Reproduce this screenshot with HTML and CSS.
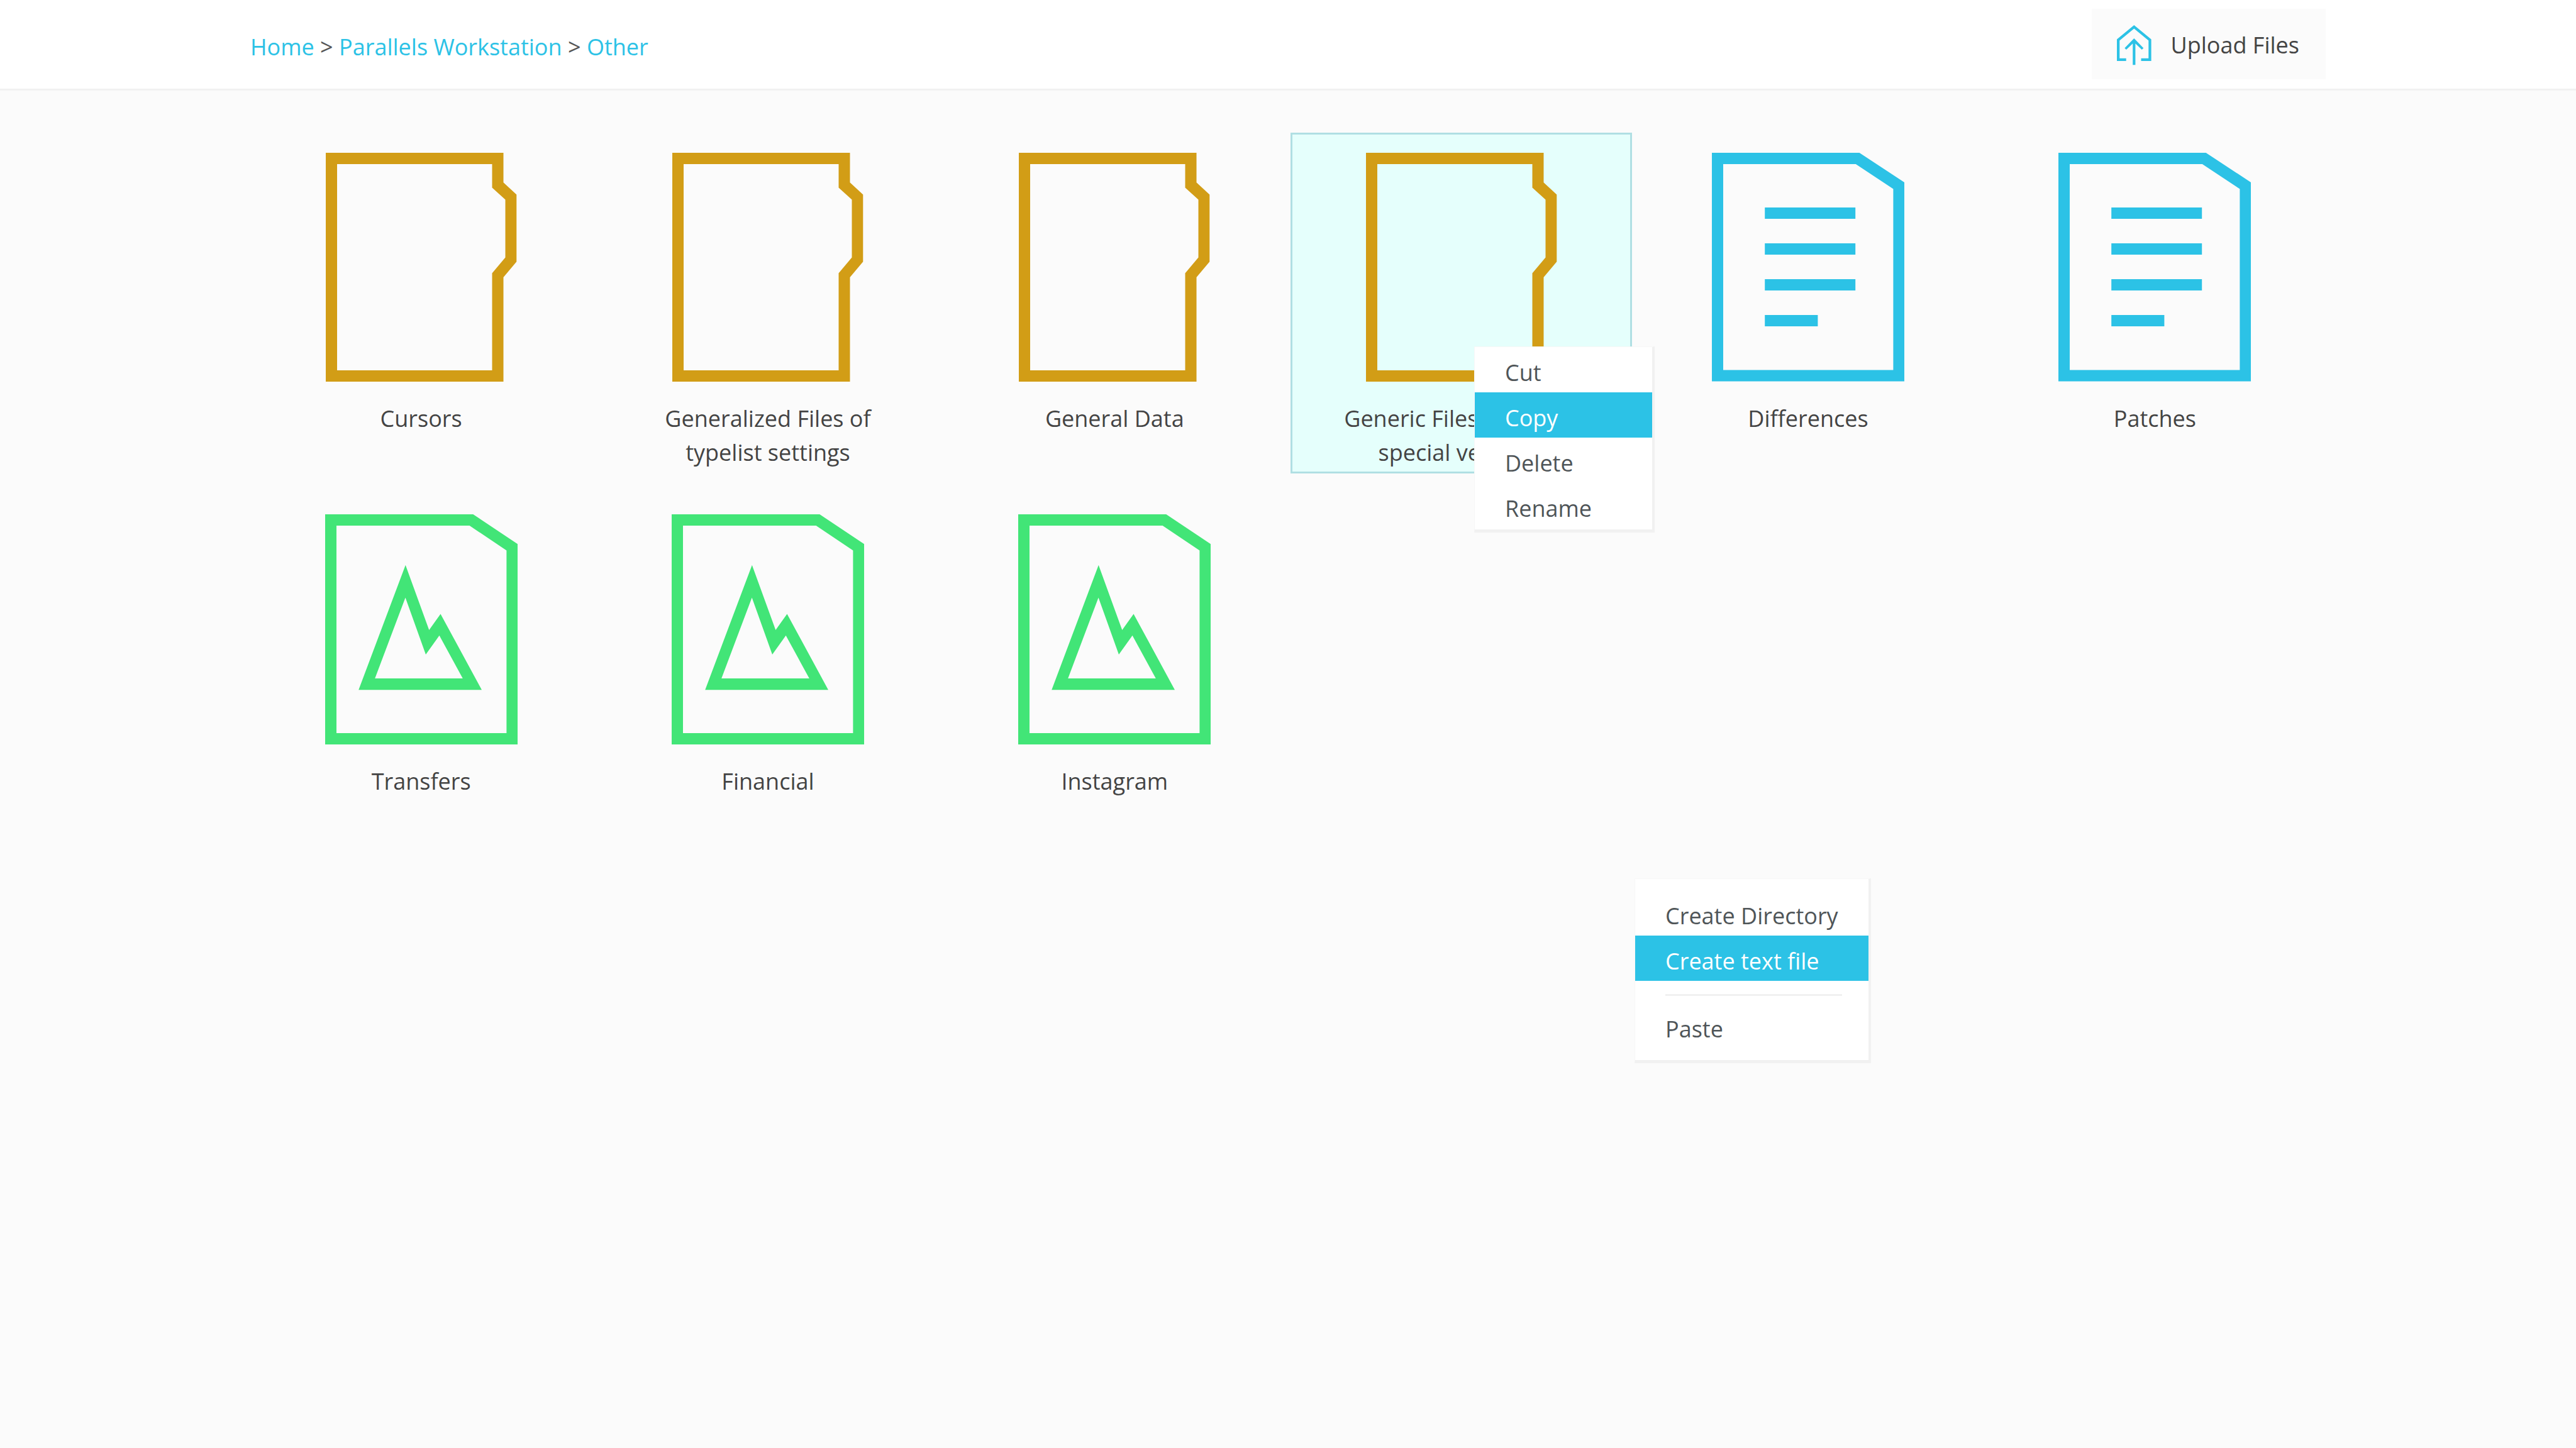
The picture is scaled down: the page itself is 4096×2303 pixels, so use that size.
FILE: index.html
```html
<!DOCTYPE html>
<html lang="en">
<head>
  <meta charset="utf-8">
  <meta name="viewport" content="width=device-width, initial-scale=1">
  <title>Other – Parallels Workstation</title>
  <link rel="stylesheet" href="styles.css">
</head>
<body>
  <svg class="sprite" aria-hidden="true">
    <symbol id="icon-folder" viewBox="0 0 304 364">
      <path fill-rule="evenodd" d="M0 0H282.500V47.200L303.300 66.500V173.200L282.500 197.900V364H0ZM18 18V346H264.500V191.500L285.500 166.500V74.500L264.500 55.500V18Z"/>
    </symbol>
    <symbol id="icon-text" viewBox="0 0 306 364">
      <path fill-rule="evenodd" d="M0 0H234.600L306 47V363.400H0ZM18 18V345.400H288.400V57.500L228.800 18Z"/>
      <path d="M84.200 87H228.200V105H84.200ZM84.200 144H228.200V162H84.200ZM84.200 201H228.200V219H84.200ZM84.200 258H168.400V276H84.200Z"/>
    </symbol>
    <symbol id="icon-image" viewBox="0 0 306 366">
      <path fill-rule="evenodd" d="M0 0H235.300L306 47.300V366H0ZM18 18V348H288.400V57.600L229.600 18Z"/>
      <path fill-rule="evenodd" d="M127.800 80.700L165.300 184.100L183.500 158.400L249 279.200H53.200ZM127.600 132.400L79.200 261H218.800L181.600 192.800L160 223Z"/>
    </symbol>
    <symbol id="icon-upload" viewBox="0 0 55 64">
      <path d="M27.300 0L54.600 22.500V57.100H38.500V52.800H50.300V24.500L27.300 5.500L4.300 24.500V52.800H14.700V57.100H0V22.500Z"/>
      <path d="M27.300 21.100L42.300 36.500L39.700 39.100L29.400 29.200V63.300H25.200V29.200L14.900 39.100L12.300 36.500Z"/>
    </symbol>
  </svg>

  <header class="header">
    <div class="container header-row">
      <nav class="breadcrumb" aria-label="Breadcrumb">
        <a href="#">Home</a> &gt; <a href="#">Parallels Workstation</a> &gt; <a href="#">Other</a>
      </nav>
      <button class="upload" type="button">
        <svg class="upload-icon" aria-hidden="true"><use href="#icon-upload"/></svg>
        Upload Files
      </button>
    </div>
  </header>

  <main class="container browser">
    <ul class="files">
      <li class="file folder"><svg class="file-icon"><use href="#icon-folder"/></svg><span class="file-name">Cursors</span></li>
      <li class="file folder"><svg class="file-icon"><use href="#icon-folder"/></svg><span class="file-name">Generalized Files of typelist settings</span></li>
      <li class="file folder"><svg class="file-icon"><use href="#icon-folder"/></svg><span class="file-name">General Data</span></li>
      <li class="file folder selected">
        <svg class="file-icon"><use href="#icon-folder"/></svg><span class="file-name">Generic Files for these special versions</span>
        <div class="menu file-menu" role="menu">
          <button class="menu-item" type="button" role="menuitem">Cut</button>
          <button class="menu-item active" type="button" role="menuitem">Copy</button>
          <button class="menu-item" type="button" role="menuitem">Delete</button>
          <button class="menu-item" type="button" role="menuitem">Rename</button>
        </div>
      </li>
      <li class="file text"><svg class="file-icon"><use href="#icon-text"/></svg><span class="file-name">Differences</span></li>
      <li class="file text"><svg class="file-icon"><use href="#icon-text"/></svg><span class="file-name">Patches</span></li>
      <li class="file image"><svg class="file-icon"><use href="#icon-image"/></svg><span class="file-name">Transfers</span></li>
      <li class="file image"><svg class="file-icon"><use href="#icon-image"/></svg><span class="file-name">Financial</span></li>
      <li class="file image"><svg class="file-icon"><use href="#icon-image"/></svg><span class="file-name">Instagram</span></li>
    </ul>

    <div class="menu folder-menu" role="menu">
      <button class="menu-item" type="button" role="menuitem">Create Directory</button>
      <button class="menu-item active" type="button" role="menuitem">Create text file</button>
      <hr class="menu-divider">
      <button class="menu-item" type="button" role="menuitem">Paste</button>
    </div>
  </main>
</body>
</html>
```
FILE: styles.css
```css
:root {
  --cyan: #2cc2e6;
  --gold: #d29d16;
  --green: #42e577;
  --line: #f1f1f1;
  --line-soft: #f7f7f7;
  --page: #fbfbfb;
}

* {
  box-sizing: border-box;
}

body {
  margin: 0;
  min-height: 100vh;
  background: var(--page);
  color: #444;
  font: 36px/54px "Open Sans", "Noto Sans", sans-serif;
}

button {
  border: 0;
  color: inherit;
  font: inherit;
  cursor: pointer;
}

.sprite {
  display: none;
}

.container {
  max-width: 3300px;
  margin: 0 auto;
}

.header {
  background: #fff;
  border-bottom: 3px solid var(--line);
}

.header-row {
  display: flex;
  align-items: center;
  justify-content: space-between;
  padding: 14px 0 15px;
}

.breadcrumb {
  padding-top: 10px;
  color: #555;
}

.breadcrumb a {
  color: var(--cyan);
  text-decoration: none;
}

.upload {
  display: flex;
  align-items: center;
  gap: 30px;
  min-height: 112px;
  padding: 4px 42px 0 40px;
  background: var(--page);
}

.upload-icon {
  width: 55px;
  height: 64px;
  fill: var(--cyan);
}

.browser {
  position: relative;
  padding: 67px 0;
}

.files {
  display: grid;
  grid-template-columns: repeat(6, 1fr);
  gap: 33px 8px;
  margin: 0;
  padding: 0;
  list-style: none;
}

.file {
  position: relative;
  display: flex;
  flex-direction: column;
  align-items: center;
  gap: 32px;
  min-height: 542px;
  padding: 29px 64px 0;
  border: 3px solid transparent;
  text-align: center;
}

.selected {
  background: #e5fffc;
  border-color: #b0dfe3;
}

.file-icon {
  width: 306px;
  height: 364px;
}

.folder .file-icon {
  width: 304px;
  fill: var(--gold);
}

.text .file-icon {
  fill: var(--cyan);
}

.image .file-icon {
  height: 366px;
  fill: var(--green);
}

.menu {
  position: absolute;
  z-index: 1;
  background: #fff;
  border-style: solid;
  border-width: 1px 4px 5px 1px;
  border-color: var(--line-soft) var(--line) var(--line) var(--line-soft);
  color: #4f5558;
}

.menu-item {
  display: block;
  width: 100%;
  padding: 14px 48px 4px;
  background: none;
  text-align: left;
  white-space: nowrap;
}

.menu-item.active {
  background: var(--cyan);
  color: #fff;
}

.menu-divider {
  height: 3px;
  margin: 21px 42px 12px 48px;
  border: 0;
  background: var(--line);
}

.file-menu {
  top: 337px;
  left: 289px;
  width: 287px;
  padding-bottom: 2px;
}

.folder-menu {
  top: 1253px;
  left: 2201px;
  width: 376px;
  padding: 18px 0;
}
```
